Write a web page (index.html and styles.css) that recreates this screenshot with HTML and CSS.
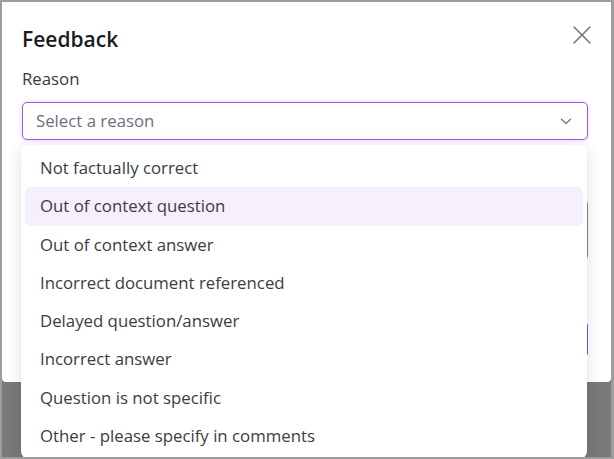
FILE: index.html
```html
<!DOCTYPE html>
<html lang="en">
<head>
<meta charset="utf-8">
<title>Feedback</title>
<link rel="stylesheet" href="styles.css">
</head>
<body>
<div class="frame">
  <div class="modal">
    <div class="header">
      <h1 class="title">Feedback</h1>
      <button class="close" aria-label="Close">
        <svg width="18" height="18" viewBox="0 0 18 18"><path d="M1 1L17 17M17 1L1 17" stroke="#777" stroke-width="1.6" fill="none" stroke-linecap="round"/></svg>
      </button>
    </div>
    <div class="label">Reason</div>
    <div class="select-wrap">
      <div class="select">
        <span class="placeholder">Select a reason</span>
        <svg class="chev" width="12" height="7" viewBox="0 0 12 7"><path d="M1.5 1.2L6 5.4L10.5 1.2" stroke="#7a7a85" stroke-width="1.4" fill="none" stroke-linecap="round" stroke-linejoin="round"/></svg>
      </div>
      <ul class="dropdown">
        <li class="option">Not factually correct</li>
        <li class="option active">Out of context question</li>
        <li class="option">Out of context answer</li>
        <li class="option">Incorrect document referenced</li>
        <li class="option">Delayed question/answer</li>
        <li class="option">Incorrect answer</li>
        <li class="option">Question is not specific</li>
        <li class="option">Other - please specify in comments</li>
      </ul>
    </div>
    <div class="textarea"></div>
    <div class="footer">
      <button class="btn-primary" aria-label="Submit"></button>
    </div>
  </div>
</div>
</body>
</html>
```

FILE: styles.css
```css
* { box-sizing: border-box; }
html, body {
  margin: 0;
  padding: 0;
  background: #9d9d9d;
}
body {
  font-family: "Open Sans", "Noto Sans", sans-serif;
}
.frame {
  width: 614px;
  height: 459px;
  border-style: solid;
  border-color: #9d9d9d;
  border-width: 2px 3px 2px 2px;
  background: #797979;
  overflow: hidden;
}
.modal {
  position: relative;
  height: 380px;
  background: #ffffff;
  padding: 22px 23px 0 20px;
  border-radius: 0 0 4px 4px;
}
.header {
  display: flex;
  justify-content: space-between;
  align-items: flex-start;
}
.title {
  margin: 0;
  font-size: 21px;
  line-height: 28px;
  font-weight: 600;
  color: #1b1b1f;
  padding-top: 0.5px;
}
.close {
  margin: 2px -3px 0 0;
  padding: 0;
  border: 0;
  background: none;
  width: 18px;
  height: 18px;
  display: flex;
}
.label {
  margin-top: 14px;
  font-size: 16.8px;
  line-height: 24px;
  color: #3a3a40;
}
.select-wrap {
  position: relative;
  margin-top: 11.5px;
}
.select {
  height: 38px;
  border: 1px solid #9a5ce4;
  border-radius: 5px;
  box-shadow: 0 0 4px rgba(150, 90, 230, 0.28);
  display: flex;
  align-items: center;
  justify-content: space-between;
  padding: 0 15px 0 13px;
  background: #fff;
}
.placeholder {
  font-size: 16.8px;
  line-height: 24px;
  color: #6b6e7c;
}
.chev { display: block; }
.dropdown {
  position: absolute;
  z-index: 5;
  top: 43px;
  left: -1px;
  width: 100%;
  margin: 0;
  padding: 4px;
  list-style: none;
  background: #ffffff;
  border-radius: 8px;
  box-shadow: 0 3px 16px rgba(0, 0, 0, 0.13);
}
.option {
  height: 38.3px;
  line-height: 38px;
  padding-left: 15px;
  font-size: 16.8px;
  color: #3b3b42;
  border-radius: 6px;
}
.option.active {
  background: #f6effd;
}
.textarea {
  margin-top: 60px;
  height: 60px;
  border: 1px solid #85859a;
  border-radius: 4px;
}
.footer {
  margin-top: 62px;
  display: flex;
  justify-content: flex-end;
}
.btn-primary {
  width: 96px;
  height: 35px;
  padding: 0;
  border: 1px solid #8b4fd8;
  background: #8b4fd8;
  border-radius: 4px;
}
```
